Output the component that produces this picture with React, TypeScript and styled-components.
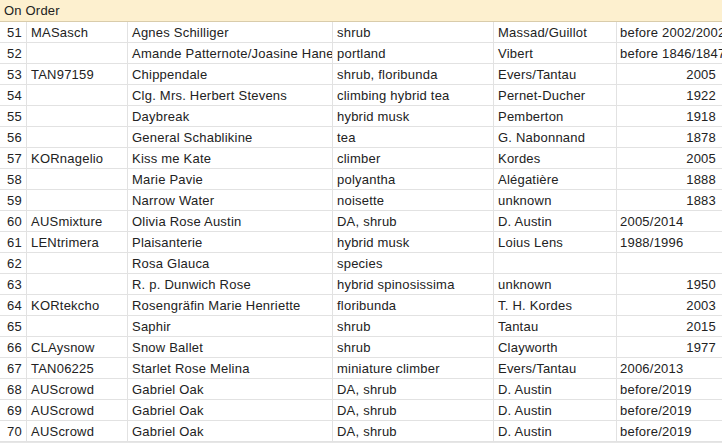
import React from "react";
import styled, { createGlobalStyle } from "styled-components";

const Global = createGlobalStyle`
  html, body { margin: 0; padding: 0; background: #ffffff; overflow: hidden; }
  body { font-family: "Liberation Sans", Arial, sans-serif; }
`;

const Sheet = styled.div`
  width: 722px;
  height: 443px;
  overflow: hidden;
  display: flex;
  flex-direction: column;
  background: #ffffff;
`;

const Header = styled.div`
  flex: none;
  height: 22px;
  box-sizing: border-box;
  background: #fdf0cf;
  border-bottom: 1px solid #d9ccab;
  padding: 0 4px;
  display: flex;
  align-items: center;
  font-size: 13px;
  letter-spacing: 0.2px;
  color: #222222;
`;

const Grid = styled.div`
  flex: none;
  display: grid;
  grid-template-columns: 27px 101px 205px 161px 123px 130px;
  grid-auto-rows: 21px;
  width: 747px;
`;

const Cell = styled.div<{ $align?: "left" | "right" }>`
  box-sizing: border-box;
  border-right: 1px solid #e2e2e2;
  border-bottom: 1px solid #e2e2e2;
  padding: 0 4px;
  display: flex;
  align-items: center;
  justify-content: ${(p) => (p.$align === "right" ? "flex-end" : "flex-start")};
  font-size: 13px;
  letter-spacing: 0.22px;
  color: #222222;
  white-space: nowrap;
  overflow: hidden;
`;

const YearCell = styled(Cell)`
  padding-left: 3px;
  padding-right: 0;
`;

const RightNum = styled.span`
  display: inline-block;
  width: 96px;
  text-align: right;
`;

const Track = styled.div`
  flex: none;
  height: 10px;
  background: #f1f1f1;
  border-top: 1px solid #e6e6e6;
  display: flex;
`;

const Thumb = styled.div`
  width: 490px;
  height: 100%;
  background: #dadada;
  border-radius: 0 4px 4px 0;
`;

type Row = [number, string, string, string, string, string];

const rows: Row[] = [
  [51, "MASasch", "Agnes Schilliger", "shrub", "Massad/Guillot", "before 2002/2002"],
  [52, "", "Amande Patternote/Joasine Hanet", "portland", "Vibert", "before 1846/1847"],
  [53, "TAN97159", "Chippendale", "shrub, floribunda", "Evers/Tantau", "2005"],
  [54, "", "Clg. Mrs. Herbert Stevens", "climbing hybrid tea", "Pernet-Ducher", "1922"],
  [55, "", "Daybreak", "hybrid musk", "Pemberton", "1918"],
  [56, "", "General Schablikine", "tea", "G. Nabonnand", "1878"],
  [57, "KORnagelio", "Kiss me Kate", "climber", "Kordes", "2005"],
  [58, "", "Marie Pavie", "polyantha", "Alégatière", "1888"],
  [59, "", "Narrow Water", "noisette", "unknown", "1883"],
  [60, "AUSmixture", "Olivia Rose Austin", "DA, shrub", "D. Austin", "2005/2014"],
  [61, "LENtrimera", "Plaisanterie", "hybrid musk", "Loius Lens", "1988/1996"],
  [62, "", "Rosa Glauca", "species", "", ""],
  [63, "", "R. p. Dunwich Rose", "hybrid spinosissima", "unknown", "1950"],
  [64, "KORtekcho", "Rosengräfin Marie Henriette", "floribunda", "T. H. Kordes", "2003"],
  [65, "", "Saphir", "shrub", "Tantau", "2015"],
  [66, "CLAysnow", "Snow Ballet", "shrub", "Clayworth", "1977"],
  [67, "TAN06225", "Starlet Rose Melina", "miniature climber", "Evers/Tantau", "2006/2013"],
  [68, "AUScrowd", "Gabriel Oak", "DA, shrub", "D. Austin", "before/2019"],
  [69, "AUScrowd", "Gabriel Oak", "DA, shrub", "D. Austin", "before/2019"],
  [70, "AUScrowd", "Gabriel Oak", "DA, shrub", "D. Austin", "before/2019"],
];

export default function App() {
  return (
    <>
      <Global />
      <Sheet>
        <Header>On Order</Header>
        <Grid>
          {rows.map((r) => {
            const numeric = /^\d+$/.test(r[5]);
            return (
              <React.Fragment key={r[0]}>
                <Cell $align="right">{r[0]}</Cell>
                <Cell>{r[1]}</Cell>
                <Cell>{r[2]}</Cell>
                <Cell>{r[3]}</Cell>
                <Cell>{r[4]}</Cell>
                <YearCell>{numeric ? <RightNum>{r[5]}</RightNum> : r[5]}</YearCell>
              </React.Fragment>
            );
          })}
        </Grid>
        <Track>
          <Thumb />
        </Track>
      </Sheet>
    </>
  );
}
